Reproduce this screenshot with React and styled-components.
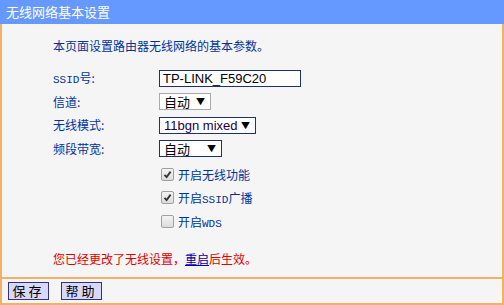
import React from "react";
import styled, { createGlobalStyle } from "styled-components";

const GlobalStyle = createGlobalStyle`
  html, body { margin: 0; padding: 0; background: #ffffff; }
  body { font-family: "Noto Sans CJK SC", "Liberation Sans", sans-serif; font-size: 12px; }
`;

const Page = styled.div`
  width: 504px;
  height: 305px;
  display: flex;
  flex-direction: column;
  background: #f5f5f5;
`;

const Title = styled.div`
  height: 24px;
  line-height: 23px;
  background: #6699ff;
  color: #ffffff;
  font-size: 13px;
  padding-left: 6px;
`;

const Body = styled.div`
  flex: 1;
  border-left: 2px solid #f2b266;
  border-right: 2px solid #f2b266;
  border-bottom: 2px solid #f2b266;
  padding: 13px 0 0 51px;
  color: #003399;
`;

const Intro = styled.div`
  height: 18px;
  line-height: 18px;
  margin-bottom: 14px;
`;

const Form = styled.div`
  display: grid;
  grid-template-columns: 106px auto;
  row-gap: 5.5px;
  align-items: center;
`;

const Label = styled.div`
  height: 18px;
  line-height: 18px;
`;

const Mono = styled.span`
  font-family: "Liberation Mono", "DejaVu Sans Mono", monospace;
  font-size: 11px;
`;

const TextBox = styled.div`
  width: 137px;
  height: 15px;
  border: 1px solid #1f2f6f;
  background: #ffffff;
  color: #000000;
  font-family: "Liberation Sans", Arial, sans-serif;
  font-size: 13px;
  line-height: 15px;
  padding-left: 3px;
`;

const Select = styled.div`
  width: ${(p) => p.$w}px;
  height: 17px;
  box-sizing: border-box;
  border: 1px solid ${(p) => (p.$dark ? "#1f2f6f" : "#a9a9a9")};
  background: #ffffff;
  color: #000000;
  display: flex;
  align-items: center;
  justify-content: space-between;
  padding: 0 5px 0 4px;
  font-size: 13px;
`;

const SelectText = styled.span`
  font-family: ${(p) => (p.$latin ? '"Liberation Sans", Arial, sans-serif' : '"Noto Sans CJK SC", sans-serif')};
  color: ${(p) => (p.$latin ? "#220044" : "#000000")};
`;

const Arrow = styled.span`
  font-size: 9px;
  color: #000000;
`;

const Checks = styled.div`
  grid-column: 2;
  display: flex;
  flex-direction: column;
  gap: 5.5px;
  margin-top: 2px;
`;

const CheckRow = styled.div`
  display: flex;
  align-items: center;
  height: 18px;
  gap: 4px;
  padding-left: 2px;
`;

const Box = styled.span`
  width: 11px;
  height: 11px;
  border: 1px solid #a0a0a0;
  border-radius: 2px;
  background: linear-gradient(#f4f4f4, #dcdcdc);
  display: flex;
  align-items: center;
  justify-content: center;
`;

const Notice = styled.div`
  margin-top: 20px;
  color: #dd0000;
  height: 18px;
  line-height: 18px;
`;

const Link = styled.a`
  color: #0000aa;
  text-decoration: underline;
`;

const Footer = styled.div`
  height: 24px;
  border-left: 2px solid #f2b266;
  border-right: 2px solid #f2b266;
  border-bottom: 2px solid #f2b266;
  display: flex;
  align-items: center;
  gap: 12px;
  padding-left: 6px;
`;

const Button = styled.div`
  width: 39px;
  height: 16px;
  border: 1px solid #333377;
  background: #d8d8f8;
  color: #000000;
  font-size: 13px;
  letter-spacing: 3px;
  text-align: center;
  line-height: 16px;
`;

function Check({ on, children }) {
  return (
    <CheckRow>
      <Box>
        {on && (
          <svg width="9" height="9" viewBox="0 0 9 9">
            <path d="M1.5 4.8 L3.6 7 L7.6 1.6" stroke="#333" strokeWidth="1.8" fill="none" />
          </svg>
        )}
      </Box>
      <span>{children}</span>
    </CheckRow>
  );
}

export default function App() {
  return (
    <Page>
      <GlobalStyle />
      <Title>无线网络基本设置</Title>
      <Body>
        <Intro>本页面设置路由器无线网络的基本参数。</Intro>
        <Form>
          <Label>
            <Mono>SSID</Mono>号:
          </Label>
          <TextBox>TP-LINK_F59C20</TextBox>
          <Label>信道:</Label>
          <Select $w={52}>
            <SelectText>自动</SelectText>
            <Arrow>▼</Arrow>
          </Select>
          <Label>无线模式:</Label>
          <Select $w={97} $dark>
            <SelectText $latin>11bgn mixed</SelectText>
            <Arrow>▼</Arrow>
          </Select>
          <Label>频段带宽:</Label>
          <Select $w={63} $dark>
            <SelectText>自动</SelectText>
            <Arrow>▼</Arrow>
          </Select>
          <Checks>
            <Check on>开启无线功能</Check>
            <Check on>
              开启<Mono>SSID</Mono>广播
            </Check>
            <Check>
              开启<Mono>WDS</Mono>
            </Check>
          </Checks>
        </Form>
        <Notice>
          您已经更改了无线设置，<Link>重启</Link>后生效。
        </Notice>
      </Body>
      <Footer>
        <Button>保存</Button>
        <Button>帮助</Button>
      </Footer>
    </Page>
  );
}
